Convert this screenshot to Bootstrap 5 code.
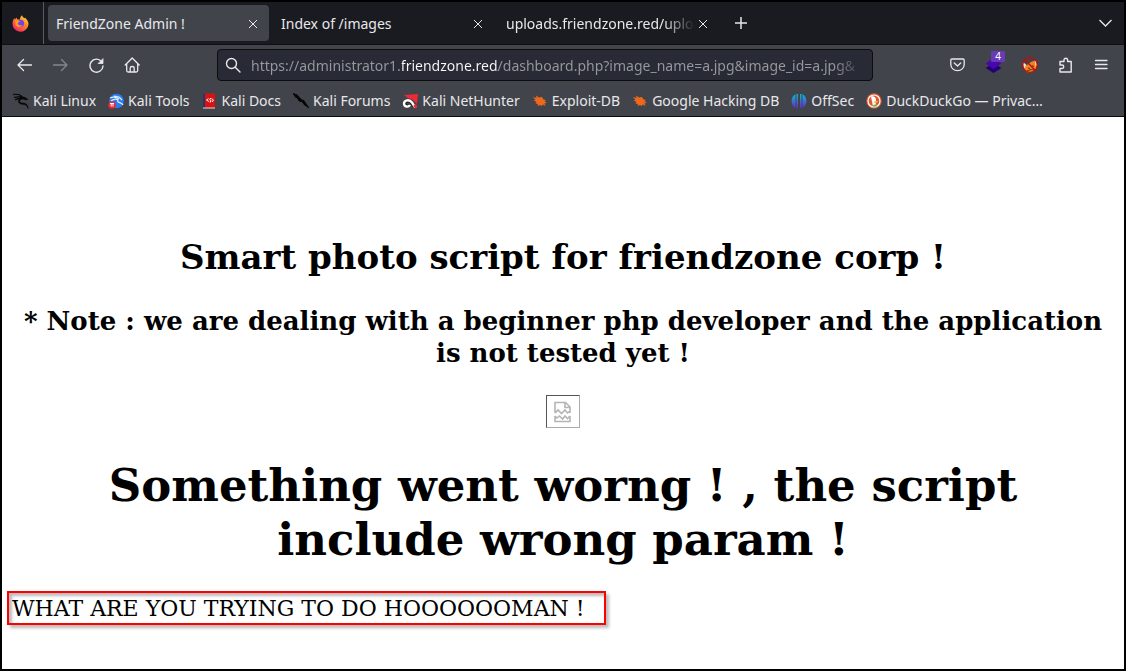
<!DOCTYPE html>
<html lang="en">
<head>
<meta charset="utf-8">
<meta name="viewport" content="width=device-width, initial-scale=1">
<title>FriendZone Admin !</title>
<link href="https://cdn.jsdelivr.net/npm/bootstrap@5.3.0/dist/css/bootstrap.min.css" rel="stylesheet">
<style>
  body { font-family: "Noto Sans", sans-serif; font-size: 14px; line-height: 20px; color: #000; }
  .window { border: 2px solid #000; }
  .chrome { background: #42444c; color: #e8e8ea; border-bottom: 1px solid #0c0c0d; }
  .chrome button { background: none; border: 0; color: inherit; padding: 0; display: flex; align-items: center; justify-content: center; }
  .chrome svg { display: block; flex: none; }
  .tabstrip { background: #1a1b20; height: 43px; border-bottom: 1px solid #101014; }
  .chrome .pinned { width: 42px; border-right: 1px solid #5b5b66; padding-right: 4px; }
  .tab-item { width: 221px; height: 36px; border-radius: 4px; padding: 1px 8px 0; }
  .tab-item.current { background: #42444c; }
  .tab-item a { color: inherit; flex: 1 1 0; min-width: 0; white-space: nowrap; }
  .tab-item a.fade-end { -webkit-mask-image: linear-gradient(to left, transparent, #000 32px); mask-image: linear-gradient(to left, transparent, #000 32px); }
  .tool { width: 36px; height: 32px; }
  .urlbar { width: 656px; height: 32px; background: #282a36; border: 1px solid #0c0c0d; border-radius: 4px; padding: 0 7px; }
  .url-input { border: 0; outline: 0; padding: 0; height: 28px; margin-left: 10px; color: #98999f; -webkit-text-fill-color: transparent;
    background: linear-gradient(to right, #98999f 151px, #fbfbfe 151px, #fbfbfe 247px, #98999f 247px, #98999f calc(100% - 32px), transparent);
    -webkit-background-clip: text; background-clip: text; }
  .count { top: 2px; left: 15px; width: 14px; height: 11px; font-size: 10px; line-height: 11px; background: #673ab7; border-radius: 1px; color: #fff; text-align: center; }
  .bookmarks { gap: 12px; padding: 10px 11px 5px; }
  .bookmarks a { color: inherit; display: flex; align-items: center; gap: 4px; white-space: nowrap; }
  .page { font-family: "DejaVu Serif", serif; font-size: 22px; line-height: 26px; padding: 120px 5px 40px; }
  .page h1, .page h2, .page h3 { font-weight: 700; color: #000; text-align: center; margin: 0; padding: 0 12px; }
  .page h2 { font-size: 34px; line-height: 40px; margin-bottom: 28px; }
  .page h3 { font-size: 26px; line-height: 32px; margin-bottom: 26px; }
  .page h1 { font-size: 45px; line-height: 54px; margin-bottom: 24px; }
  .broken { width: 34px; height: 33px; border: 1px solid; border-color: #555 #aaa #aaa #555; margin: 0 auto 31px; }
  .marked { border: 2px solid #f00; padding: 3px 19px 1px 3px; box-shadow: 3px 3px 3px #0004, inset 3px 3px 3px #0004; }
</style>
</head>
<body>
<div class="window min-vh-100">
  <header class="chrome">
    <div class="tabstrip d-flex align-items-center">
      <button class="pinned h-100" aria-label="Firefox View">
        <svg width="17" height="17" viewBox="0 0 17 17"><defs><linearGradient id="fx" x1="1" y1="0" x2=".3" y2="1"><stop stop-color="#fff14a"/><stop offset=".45" stop-color="#ff8a22"/><stop offset="1" stop-color="#f52667"/></linearGradient></defs><path d="M.5 8.500C.6 5.800 1.500 4.200 2.400 3.100l.3 1.500 2.100-2.200.3 1.800 2.800.3C8.200 2.400 9 1 10 .3c.4 1.500 1.200 1.900 2.300 3l.8-.6c2.100 1.700 3.400 4 3.400 6.300a8 8 0 0 1-16-.5z" fill="url(#fx)"/><circle cx="8.600" cy="8.300" r="3.500" fill="#7542e5"/><path d="M3 5.500c2-.5 3.700-.1 5 .7L5.800 8c0 2.200 2.500 3 4.400 1.800C9 13 4.800 12.500 3.500 10z" fill="#ff9b20"/></svg>
      </button>
      <nav class="d-flex align-items-center ms-1 gap-1">
        <div class="tab-item current d-flex align-items-center"><a href="#" class="text-decoration-none">FriendZone Admin !</a><button aria-label="Close tab"><svg width="16" height="16" viewBox="0 0 16 16" stroke="currentColor" fill="none"><path d="M4 4l8 8M12 4l-8 8"/></svg></button></div>
        <div class="tab-item d-flex align-items-center"><a href="#" class="text-decoration-none">Index of /images</a><button aria-label="Close tab"><svg width="16" height="16" viewBox="0 0 16 16" stroke="currentColor" fill="none"><path d="M4 4l8 8M12 4l-8 8"/></svg></button></div>
        <div class="tab-item d-flex align-items-center"><a href="#" class="text-decoration-none fade-end">uploads.friendzone.red/uploa</a><button aria-label="Close tab"><svg width="16" height="16" viewBox="0 0 16 16" stroke="currentColor" fill="none"><path d="M4 4l8 8M12 4l-8 8"/></svg></button></div>
      </nav>
      <button class="tool ms-1" aria-label="New tab"><svg width="16" height="16" viewBox="0 0 16 16" stroke="currentColor" stroke-width="1.500" fill="none"><path d="M8 2v12M2 8h12"/></svg></button>
      <button class="tool ms-auto" aria-label="List all tabs"><svg width="16" height="16" viewBox="0 0 16 16" stroke="currentColor" stroke-width="1.300" fill="none"><path d="M1.500 5l6 6 6-6"/></svg></button>
    </div>
    <div class="d-flex align-items-center justify-content-between px-1 pt-1">
      <div class="d-flex">
        <button class="tool" aria-label="Back"><svg width="16" height="16" viewBox="0 0 16 16" stroke="currentColor" stroke-width="1.300" fill="none" stroke-linecap="round" stroke-linejoin="round"><path d="M15.500 8H2M7.500 2.500L2 8l5.500 5.500"/></svg></button>
        <button class="tool" aria-label="Forward"><svg width="16" height="16" viewBox="0 0 16 16" stroke="#85868c" stroke-width="1.300" fill="none" stroke-linecap="round" stroke-linejoin="round"><path d="M1.500 8H15M9.500 2.500L15 8l-5.500 5.500"/></svg></button>
        <button class="tool" aria-label="Reload"><svg width="16" height="16" viewBox="0 0 16 16" stroke="currentColor" stroke-width="1.400" fill="none" stroke-linecap="round"><path d="M13.500 4.500A6.500 6.500 0 1 0 15 9"/><path d="M15 2v4.500h-4.500z" fill="currentColor" stroke-width=".8" stroke-linejoin="round"/></svg></button>
        <button class="tool" aria-label="Home"><svg width="16" height="16" viewBox="0 0 16 16" stroke="currentColor" stroke-width="1.300" fill="none" stroke-linecap="round" stroke-linejoin="round"><path d="M1.200 8l7-7 7 7M2.700 7v6.500q0 1.500 1.500 1.500h8q1.500 0 1.500-1.500V7M6.200 15v-4q0-1.500 2-1.500t2 1.500v4"/></svg></button>
      </div>
      <label class="urlbar d-flex align-items-center">
        <svg width="16" height="16" viewBox="0 0 16 16" stroke="currentColor" stroke-width="1.400" fill="none" stroke-linecap="round"><circle cx="6.500" cy="6.500" r="5"/><path d="M10.200 10.200L15 15"/></svg>
        <input class="url-input flex-grow-1" type="text" aria-label="Address" value="https://administrator1.friendzone.red/dashboard.php?image_name=a.jpg&amp;image_id=a.jpg&amp;">
      </label>
      <div class="d-flex">
        <button class="tool" aria-label="Save to Pocket"><svg width="16" height="16" viewBox="0 0 16 16" stroke="currentColor" stroke-width="1.300" fill="none" stroke-linecap="round" stroke-linejoin="round"><path d="M2 2h11q1.200 0 1.200 1.200V7.500a6.700 6.200 0 0 1-13.400 0V3.200Q.8 2 2 2zM4.300 6l3.200 3 3.200-3"/></svg></button>
        <button class="tool position-relative" aria-label="Wappalyzer"><svg width="16" height="16" viewBox="0 0 16 16"><path d="M7.500 6l8 5-8 5-8-5z" fill="#240073"/><path d="M7.500 1l8 5.500-8 5.500-8-5.500z" fill="#4608ad"/></svg><span class="count position-absolute">4</span></button>
        <button class="tool" aria-label="FoxyProxy"><svg width="16" height="16" viewBox="0 0 16 16" fill="none"><path d="M2 7l3 1 4-3 5-2 1 5-1 4-3 3-6 .5L2 12z" fill="#ef8420"/><path d="M.8 5L4 7.500 3 11 1.500 10zM13 3l2 4-1.500 3z" fill="#f7e6d0"/><path d="M6 11l2 .5M10 8.500l2 1M5 14l4-1.500 3 .5" stroke="#633518"/><circle cx="8" cy="8" r="7.300" stroke="#c00c0c" stroke-width="1.200"/><path d="M2.800 2.800l10.400 10.400" stroke="#c00c0c" stroke-width="1.400"/></svg></button>
        <button class="tool" aria-label="Extensions"><svg width="16" height="16" viewBox="0 0 16 16" stroke="currentColor" stroke-width="1.400" fill="none" stroke-linejoin="round"><path d="M2 4.500h4V3a1.800 1.800 0 0 1 3.600 0v1.500h3.600V15H2v-3.500h2a1.600 1.600 0 0 0 0-3.500H2z"/></svg></button>
        <button class="tool" aria-label="Menu"><svg width="16" height="16" viewBox="0 0 16 16" stroke="currentColor" stroke-width="1.300" fill="none" stroke-linecap="round"><path d="M1.500 3.500h11.500M1.500 7.500h11.500M1.500 11.500h11.500"/></svg></button>
      </div>
    </div>
    <nav class="bookmarks d-flex align-items-center" aria-label="Bookmarks">
      <a href="#" class="text-decoration-none"><svg width="16" height="16" viewBox="0 0 16 16" fill="none" stroke="#050505"><path d="M0 1.500c4-.8 7 0 9 2M1 4.500c4-1 7-.5 8 .5M2 7q4-2 6-1" stroke-width="1.100"/><path d="M7 3l5 1.500 3 2-2 .3-3-.8C6 6 5.500 9.500 9 10c4 0 6 1.800 6 5.500-.5-3-2.500-4-5.500-4.200C4 11 4.500 5.500 8.500 5z" fill="#050505" stroke-width=".6"/></svg>Kali Linux</a>
      <a href="#" class="text-decoration-none"><svg width="16" height="16" viewBox="0 0 16 16" fill="none"><circle cx="8.500" cy="8" r="7.300" fill="#287df0"/><path d="M2 5q5-2 9 1M3 8q4-3 7-1c-2 3 4 2 5 5M6 3l5 1 3 3" stroke="#d9ebff" stroke-width="1.200"/><circle cx="4" cy="12" r="3.800" fill="#e52a31"/><path d="M2 10.500h4M3.200 10.500v3M5 10.500v3" stroke="#fff"/></svg>Kali Tools</a>
      <a href="#" class="text-decoration-none"><svg width="16" height="16" viewBox="0 0 16 16" fill="none"><path d="M1 .5h12V15H1z" fill="#d91111"/><path d="M1 .5h2V15H1z" fill="#24376b"/><path d="M1 15h12" stroke="#ddd"/><path d="M6.500 5.500L4.500 7l2.500 1.500M9.500 5.500L11.500 7 10 9M9 5L7.500 6.500l1.500 1L8 9.500" stroke="#fff"/></svg>Kali Docs</a>
      <a href="#" class="text-decoration-none"><svg width="16" height="16" viewBox="0 0 16 16" fill="#050505" stroke="#050505" stroke-width=".8"><path d="M0 .5l4 1.200L6 4l3 3 2 .5 1.500 2.500 3.500 5-5-3.500L9.500 9 6 8 4 4.500l-1 .3z"/></svg>Kali Forums</a>
      <a href="#" class="text-decoration-none"><svg width="16" height="16" viewBox="0 0 16 16" fill="none"><path d="M12.500 14L9.500 9.500C7 6.500 2.500 8 2.500 10.500c0 2.500 3.500 3.500 5 1.500" stroke="#222" stroke-width="3.400"/><path d="M2 2L16 1l-1 10-4-4-5-2z" fill="#ef2938"/><path d="M13 14.500L10 9.500C7.500 6 2 7 2 10.500c0 3.500 4.500 4 6 1.500" stroke="#fff" stroke-width="2.400"/><path d="M11 13l2.500 2.500L15.500 14 14 11z" fill="#ef2938"/></svg>Kali NetHunter</a>
      <a href="#" class="text-decoration-none"><svg width="16" height="16" viewBox="0 0 16 16" fill="#ee681c"><path d="M1 4l3.500 1L4 2.500 7 4.500l3-.5 1.500 2.500 2.500.5-1.500 1.200L15 10l-2.500.3 1 2.700-2.500-1.500L9.500 13 8 12l-2.500 1 .5-2-2.500-.5 1-1.500L1.500 7.500 3.500 7z"/></svg>Exploit-DB</a>
      <a href="#" class="text-decoration-none"><svg width="16" height="16" viewBox="0 0 16 16" fill="#ee681c"><path d="M1 4l3.500 1L4 2.500 7 4.500l3-.5 1.500 2.500 2.500.5-1.500 1.200L15 10l-2.500.3 1 2.700-2.500-1.500L9.500 13 8 12l-2.500 1 .5-2-2.500-.5 1-1.500L1.500 7.500 3.500 7z"/></svg>Google Hacking DB</a>
      <a href="#" class="text-decoration-none"><svg width="16" height="16" viewBox="0 0 16 16"><defs><linearGradient id="os" x2="0" y2="1"><stop stop-color="#08bcca"/><stop offset="1" stop-color="#692ad5"/></linearGradient></defs><path d="M4.500 1.200v13.600C-.7 12.500-.7 3.500 4.500 1.200zM5.500 1h1.500v14H5.500zM9 1h1.500v14H9zM11.500 1.200c5.200 2.300 5.200 11.300 0 13.600z" fill="url(#os)"/></svg>OffSec</a>
      <a href="#" class="text-decoration-none"><svg width="16" height="16" viewBox="0 0 16 16" fill="none"><circle cx="8" cy="8" r="7.700" fill="#de5833"/><circle cx="8" cy="8" r="6" stroke="#fff" stroke-width="1.200"/><path d="M5 3.500c3-1 5 1 5 3.500l-.5 6.500H7z" fill="#fff"/><path d="M8 8.500l4-.8-1 1.800-3 .3z" fill="#fdb813"/><path d="M7 12l4-1v2.500H7z" fill="#65bc46"/></svg>DuckDuckGo — Privac…</a>
    </nav>
  </header>
  <main class="page">
    <h2>Smart photo script for friendzone corp !</h2>
    <h3>* Note : we are dealing with a beginner php developer and the application is not tested yet !</h3>
    <div class="broken d-flex align-items-center justify-content-center" role="img" aria-label="Missing photo"><svg width="20" height="22" viewBox="0 0 20 22" fill="none" stroke="#b5b5b5" stroke-width="1.600"><path d="M2 12V1.500h10.500L17 6v6M12 2v4.500h5M2 12l3-3 3.500 3.500L12 9l2.500 3 2.500-2M2 15v5.500h15V15M2 15l2 2 2.500-2 3 3 2.500-3 2.500 2.500L17 15"/></svg></div>
    <h1>Something went worng ! , the script include wrong param !</h1>
    <div class="d-flex"><span class="marked">WHAT ARE YOU TRYING TO DO HOOOOOOMAN !</span></div>
  </main>
</div>
<script src="https://cdn.jsdelivr.net/npm/bootstrap@5.3.0/dist/js/bootstrap.bundle.min.js"></script>
</body>
</html>
